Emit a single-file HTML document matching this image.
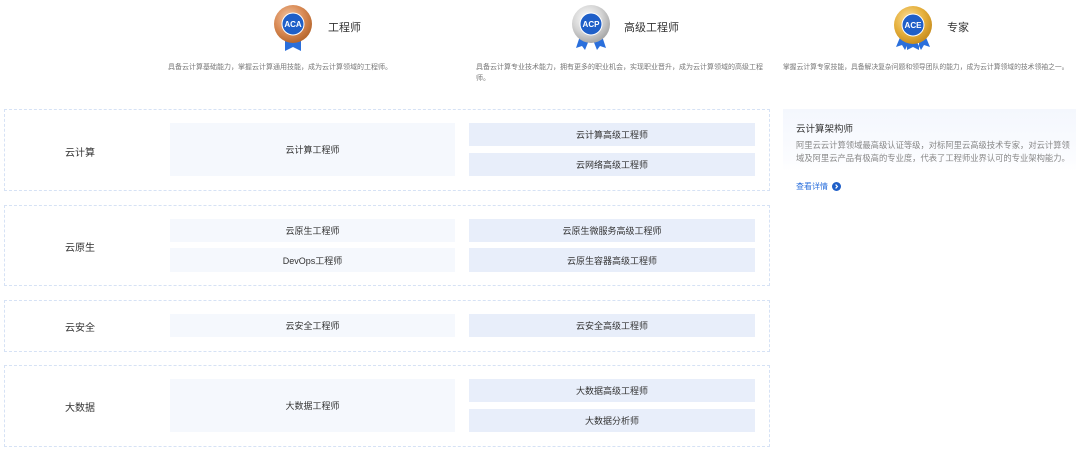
<!DOCTYPE html>
<html><head><meta charset="utf-8"><style>
*{margin:0;padding:0;box-sizing:border-box}
body{width:1080px;height:452px;background:#fff;position:relative;overflow:hidden;font-family:"Liberation Sans","Noto Sans CJK SC",sans-serif;color:#333}
.a{position:absolute}
.h{font-size:11px;color:#333;line-height:14px}
.d{font-size:7px;color:#777;line-height:11px}
.g{position:absolute;left:4px;width:766px;border:1px dashed #d6e2f5}
.lab{position:absolute;left:0;width:150px;text-align:center;font-size:10px;color:#333}
.c{position:absolute;display:flex;align-items:center;justify-content:center;font-size:9px;color:#333}
.ca{left:165px;width:285px;background:#f5f8fd}
.cb{left:464px;width:286px;background:#e8eefa}
</style></head><body>

<svg class="a" style="left:272px;top:4px" width="42" height="48" viewBox="0 0 42 48">
<path d="M13 34 L13 47 L21 43 L29 47 L29 34Z" fill="#2a6fdc"/>
<defs><radialGradient id="cu" cx="40%" cy="35%" r="65%"><stop offset="0" stop-color="#f4c9a8"/><stop offset="0.6" stop-color="#d98a55"/><stop offset="1" stop-color="#b8682f"/></radialGradient></defs>
<circle cx="21" cy="20" r="19" fill="url(#cu)"/>
<circle cx="21" cy="20" r="11" fill="#1f5fc8" stroke="#fff" stroke-width="1"/>
<text x="21" y="23" font-size="8" font-weight="bold" fill="#fff" text-anchor="middle" font-family="Liberation Sans">ACA</text>
</svg>
<div class="a h" style="left:328px;top:21px">工程师</div>
<div class="a d" style="left:168px;top:62px">具备云计算基础能力，掌握云计算通用技能，成为云计算领域的工程师。</div>

<svg class="a" style="left:570px;top:4px" width="42" height="48" viewBox="0 0 42 48">
<path d="M10 32 L6 44 L12 42 L15 46 L19 36Z M32 32 L36 44 L30 42 L27 46 L23 36Z" fill="#2a6fdc"/>
<defs><radialGradient id="ag" cx="40%" cy="35%" r="65%"><stop offset="0" stop-color="#ffffff"/><stop offset="0.6" stop-color="#d4d4d4"/><stop offset="1" stop-color="#a9a9a9"/></radialGradient></defs>
<circle cx="21" cy="20" r="19" fill="url(#ag)"/>
<circle cx="21" cy="20" r="11" fill="#1f5fc8" stroke="#fff" stroke-width="1"/>
<text x="21" y="23" font-size="8" font-weight="bold" fill="#fff" text-anchor="middle" font-family="Liberation Sans">ACP</text>
</svg>
<div class="a h" style="left:624px;top:21px">高级工程师</div>
<div class="a d" style="left:476px;top:62px;width:288px">具备云计算专业技术能力，拥有更多的职业机会，实现职业晋升，成为云计算领域的高级工程师。</div>

<svg class="a" style="left:892px;top:5px" width="42" height="48" viewBox="0 0 42 48">
<path d="M9 30 L4 42 L10 40 L13 45 L18 35Z M33 30 L38 42 L32 40 L29 45 L24 35Z M15 34 L15 45 L21 42 L27 45 L27 34Z" fill="#2a6fdc"/>
<defs><radialGradient id="au" cx="40%" cy="35%" r="65%"><stop offset="0" stop-color="#fbe1a0"/><stop offset="0.6" stop-color="#e6b13e"/><stop offset="1" stop-color="#c98f1f"/></radialGradient></defs>
<circle cx="21" cy="20" r="19" fill="url(#au)"/>
<circle cx="21" cy="20" r="11" fill="#1f5fc8" stroke="#fff" stroke-width="1"/>
<text x="21" y="23" font-size="8" font-weight="bold" fill="#fff" text-anchor="middle" font-family="Liberation Sans">ACE</text>
</svg>
<div class="a h" style="left:947px;top:21px">专家</div>
<div class="a d" style="left:783px;top:62px;font-size:6.8px;white-space:nowrap">掌握云计算专家技能，具备解决复杂问题和领导团队的能力，成为云计算领域的技术领袖之一。</div>

<div class="g" style="top:109px;height:82px">
<div class="lab" style="top:34px">云计算</div>
<div class="c ca" style="top:13px;height:53px">云计算工程师</div>
<div class="c cb" style="top:13px;height:23px">云计算高级工程师</div>
<div class="c cb" style="top:43px;height:23px">云网络高级工程师</div>
</div>
<div class="g" style="top:205px;height:81px">
<div class="lab" style="top:33px">云原生</div>
<div class="c ca" style="top:13px;height:23px">云原生工程师</div>
<div class="c ca" style="top:42px;height:24px">DevOps工程师</div>
<div class="c cb" style="top:13px;height:23px">云原生微服务高级工程师</div>
<div class="c cb" style="top:42px;height:24px">云原生容器高级工程师</div>
</div>
<div class="g" style="top:300px;height:52px">
<div class="lab" style="top:18px">云安全</div>
<div class="c ca" style="top:13px;height:23px">云安全工程师</div>
<div class="c cb" style="top:13px;height:23px">云安全高级工程师</div>
</div>
<div class="g" style="top:365px;height:82px">
<div class="lab" style="top:33px">大数据</div>
<div class="c ca" style="top:13px;height:53px">大数据工程师</div>
<div class="c cb" style="top:13px;height:23px">大数据高级工程师</div>
<div class="c cb" style="top:43px;height:23px">大数据分析师</div>
</div>

<div class="a" style="left:783px;top:109px;width:293px;height:62px;background:linear-gradient(180deg,#f4f7fd,#fbfcff 80%,#fff)"></div>
<div class="a" style="left:796px;top:121px;font-size:9.5px;color:#333">云计算架构师</div>
<div class="a" style="left:796px;top:139px;width:274px;font-size:8.3px;line-height:13px;color:#888">阿里云云计算领域最高级认证等级，对标阿里云高级技术专家，对云计算领域及阿里云产品有极高的专业度，代表了工程师业界认可的专业架构能力。</div>
<div class="a" style="left:796px;top:181px;font-size:8px;color:#2a6fdc">查看详情</div>
<svg class="a" style="left:832px;top:182px" width="9" height="9" viewBox="0 0 9 9"><circle cx="4.5" cy="4.5" r="4.5" fill="#1f5fc8"/><path d="M3.6 2.6 L5.4 4.5 L3.6 6.4" stroke="#fff" stroke-width="1.2" fill="none"/></svg>
</body></html>
